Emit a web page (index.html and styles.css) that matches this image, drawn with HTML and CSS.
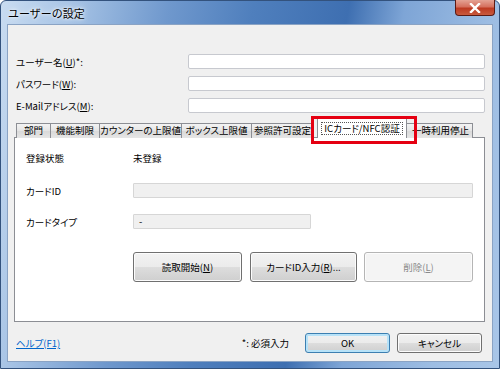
FILE: index.html
```html
<!DOCTYPE html>
<html lang="ja">
<head>
  <meta charset="UTF-8">
  <title>ユーザーの設定</title>
  <link rel="stylesheet" href="styles.css">
</head>
<body>
  <div class="window">
    <div class="titlebar">
      <span class="title">ユーザーの設定</span>
      <button class="close" aria-label="閉じる">
        <svg width="12" height="10" viewBox="0 0 12 10"><path d="M2 1 L10 9 M10 1 L2 9" stroke="#fff" stroke-width="2.4" stroke-linecap="square"/></svg>
      </button>
    </div>

    <div class="client">
      <div class="fields">
        <div class="row">
          <label>ユーザー名(<u>U</u>)*:</label>
          <input type="text" class="input">
        </div>
        <div class="row">
          <label>パスワード(<u>W</u>):</label>
          <input type="password" class="input">
        </div>
        <div class="row">
          <label>E-Mailアドレス(<u>M</u>):</label>
          <input type="text" class="input">
        </div>
      </div>

      <div class="tabs">
        <div class="tab t1">部門</div>
        <div class="tab t2">機能制限</div>
        <div class="tab t3">カウンターの上限値</div>
        <div class="tab t4">ボックス上限値</div>
        <div class="tab t5">参照許可設定</div>
        <div class="tab tab-active"><span class="focus">ICカード/NFC認証</span><span class="mark"></span></div>
        <div class="tab t7">一時利用停止</div>
      </div>

      <div class="panel">
        <div class="prow status">
          <span class="plabel">登録状態</span>
          <span>未登録</span>
        </div>
        <div class="prow card-id">
          <span class="plabel">カードID</span>
          <div class="box box-id"></div>
        </div>
        <div class="prow card-type">
          <span class="plabel">カードタイプ</span>
          <div class="box box-type">-</div>
        </div>
        <div class="actions">
          <button class="btn btn-read">読取開始(<u>N</u>)</button>
          <button class="btn btn-input">カードID入力(<u>R</u>)...</button>
          <button class="btn btn-read" disabled>削除(<u>L</u>)</button>
        </div>
      </div>

      <div class="footer">
        <a href="#" class="help">ヘルプ(F1)</a>
        <span class="note">*: 必須入力</span>
        <button class="btn btn-ok">OK</button>
        <button class="btn btn-cancel">キャンセル</button>
      </div>
    </div>
  </div>
</body>
</html>
```

FILE: styles.css
```css
body {
  margin: 0;
  font-family: "Noto Sans CJK JP", "Noto Sans", sans-serif;
  font-size: 10px;
  color: #000;
  background: #fff;
}
.window {
  width: 500px;
  height: 369px;
  box-sizing: border-box;
  display: flex;
  flex-direction: column;
  border-radius: 6px 6px 0 0;
  border: 1px solid #33527d;
  background: linear-gradient(100deg, #c9dcf1 0%, #a9c5e6 12%, #6f98cd 30%, #4f7fbd 45%, #3e6fb1 62%, #7ea5d6 72%, #9dbde3 88%, #a9c6e8 100%);
}
.titlebar {
  height: 23px;
  display: flex;
  justify-content: space-between;
  align-items: flex-start;
}
.title {
  margin: 4px 0 0 7px;
  font-size: 11px;
  color: #000;
  text-shadow: 0 0 6px #fff, 0 0 3px #fff;
}
.close {
  width: 40px;
  height: 16px;
  margin: -1px 4px 0 0;
  padding: 0;
  border: 1px solid #5b1a14;
  border-top: none;
  border-radius: 0 0 4px 4px;
  background: linear-gradient(#e4a294 0%, #d5705e 45%, #bd3a22 55%, #c85a3e 100%);
  display: flex;
  align-items: center;
  justify-content: center;
}
.client {
  flex: 1;
  margin: 0 6px 6px 6px;
  background: #f0f0f0;
  border: 1px solid #8aa3c4;
  display: flex;
  flex-direction: column;
  font-feature-settings: "palt";
}
.fields {
  padding: 29px 7px 0 8px;
  display: flex;
  flex-direction: column;
  gap: 7px;
}
.row {
  display: flex;
  align-items: center;
  justify-content: space-between;
  height: 15px;
}
.row label {
  font-size: 9.5px;
}
.input {
  box-sizing: border-box;
  width: 297px;
  height: 15px;
  margin: 0;
  border: 1px solid #c7c9cf;
  border-radius: 2px;
  background: #fff;
}
.tabs {
  margin: 5px 0 0 8px;
  display: flex;
  align-items: flex-end;
  height: 20px;
  position: relative;
  z-index: 1;
}
.tab {
  box-sizing: border-box;
  height: 15px;
  border: 1px solid #8c8e94;
  border-bottom: none;
  margin-right: -1px;
  background: linear-gradient(#f3f3f3, #e4e4e4 50%, #d9d9d9 51%, #e6e6e6);
  font-size: 9.5px;
  line-height: 13px;
  text-align: center;
  white-space: nowrap;
}
.t1 { width: 35px; }
.t2 { width: 50px; }
.t3 { width: 83px; }
.t4 { width: 71px; }
.t5 { width: 63px; }
.t7 {
  width: 67px;
  padding-left: 5px;
  text-align: left;
}
.tab-active {
  position: relative;
  width: 90px;
  height: 20px;
  margin-left: 4px;
  background: #fff;
  padding-top: 3px;
  z-index: 2;
}
.focus {
  display: inline-block;
  border: 1px dotted #555;
  padding: 0 2px;
  line-height: 11px;
}
.mark {
  position: absolute;
  left: -7px;
  top: -3px;
  width: 100px;
  height: 22px;
  border: 3px solid #e50012;
}
.panel {
  margin: -1px 7px 0 6px;
  height: 185px;
  background: #fff;
  border: 1px solid #8c8e94;
  box-sizing: border-box;
  padding: 12px 0 0 11px;
  font-size: 9.5px;
}
.prow {
  display: flex;
  align-items: center;
  height: 15px;
}
.plabel {
  width: 107px;
}
.card-id {
  margin-top: 18px;
}
.card-type {
  margin-top: 16px;
}
.box {
  box-sizing: border-box;
  height: 15px;
  border: 1px solid #d6d6d6;
  border-radius: 1px;
  background: #f0f0f0;
  padding-left: 5px;
  line-height: 13px;
}
.box-id { width: 340px; }
.box-type { width: 178px; }
.actions {
  display: flex;
  gap: 8px;
  margin: 23px 0 0 107px;
}
.btn {
  font-family: inherit;
  font-feature-settings: "palt";
  font-size: 9.5px;
  color: #000;
  box-sizing: border-box;
  border: 1px solid #707070;
  border-radius: 3px;
  background: linear-gradient(#f2f2f2 0%, #ebebeb 50%, #dddddd 51%, #cfcfcf 100%);
  box-shadow: inset 0 0 0 1px #fcfcfc;
  padding: 0;
}
.btn-read {
  width: 109px;
  height: 30px;
}
.btn-input {
  width: 107px;
  height: 30px;
  margin-right: -1px;
}
.btn:disabled {
  border-color: #b5b5b5;
  background: #f4f4f4;
  color: #8a8a8a;
}
.footer {
  display: flex;
  align-items: center;
  margin-top: 11px;
  padding: 0 10px 0 8px;
  height: 20px;
}
.help {
  color: #0066cc;
  font-size: 9.5px;
}
.note {
  margin-left: auto;
  margin-right: 16px;
  font-size: 9.5px;
}
.btn-ok {
  width: 85px;
  height: 20px;
  border-color: #3c7fb1;
  box-shadow: inset 0 0 0 2px #b7e2f8;
}
.btn-cancel {
  width: 85px;
  height: 20px;
  margin-left: 7px;
}
```
